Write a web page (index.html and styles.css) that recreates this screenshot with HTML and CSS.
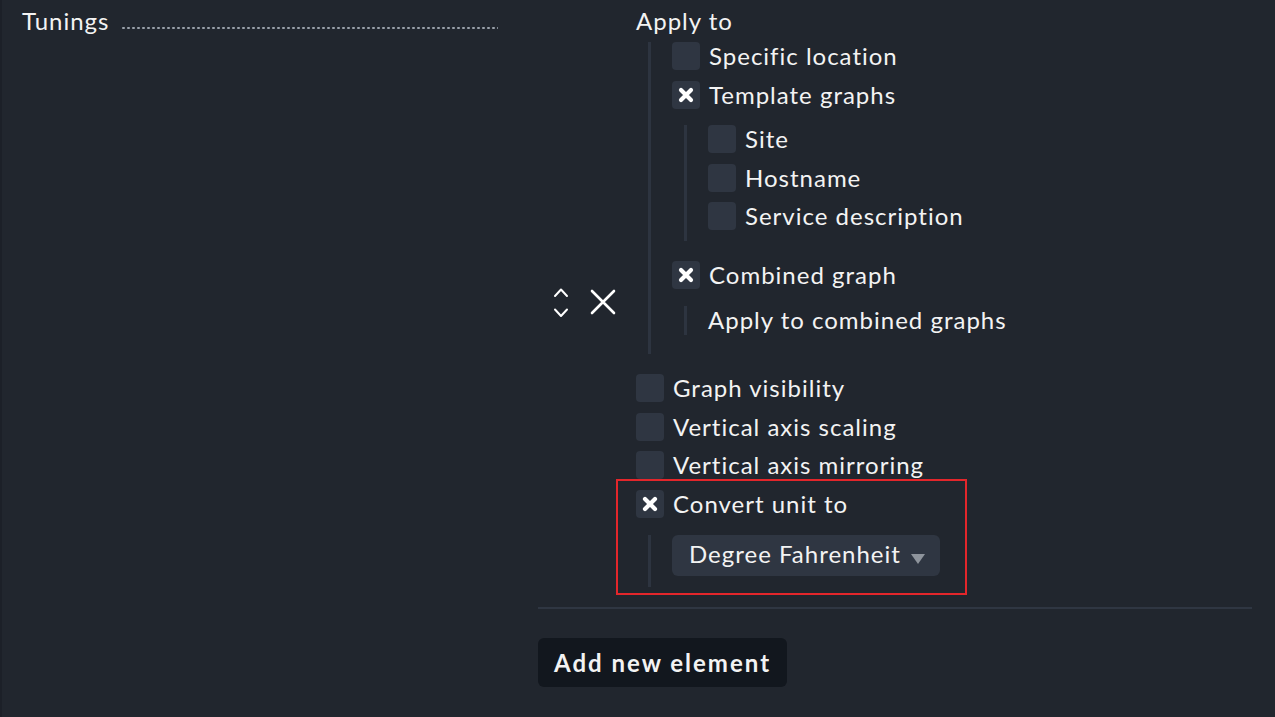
FILE: index.html
```html
<!DOCTYPE html>
<html>
<head>
<meta charset="utf-8">
<link rel="stylesheet" href="styles.css">
</head>
<body>
<div class="page">
  <div class="label-col">
    <span class="title">Tunings</span>
    <span class="dots"></span>
  </div>
  <div class="value-col">
    <div class="entry">
      <div class="entry-controls">
        <svg class="ico-updown" width="16" height="31" viewBox="0 0 16 31"><path d="M2 9 L8 2.5 L14 9 M2 22.5 L8 29 L14 22.5" fill="none" stroke="#fff" stroke-width="2" stroke-linecap="round" stroke-linejoin="round"/></svg>
        <svg class="ico-del" width="26" height="26" viewBox="0 0 26 26"><path d="M2 2 L24 24 M24 2 L2 24" fill="none" stroke="#fff" stroke-width="2.6" stroke-linecap="round"/></svg>
      </div>
      <div class="dict">
        <div class="heading">Apply to</div>
        <div class="nest nest-apply">
          <div class="row"><span class="cb"></span><span class="lbl">Specific location</span></div>
          <div class="row"><span class="cb on"><svg width="16" height="16" viewBox="0 0 16 16"><path d="M3 3 L13 13 M13 3 L3 13" stroke="#fff" stroke-width="4.2" stroke-linecap="round"/></svg></span><span class="lbl">Template graphs</span></div>
          <div class="nest nest-tpl">
            <div class="row"><span class="cb"></span><span class="lbl">Site</span></div>
            <div class="row"><span class="cb"></span><span class="lbl">Hostname</span></div>
            <div class="row"><span class="cb"></span><span class="lbl">Service description</span></div>
          </div>
          <div class="row row-combined"><span class="cb on"><svg width="16" height="16" viewBox="0 0 16 16"><path d="M3 3 L13 13 M13 3 L3 13" stroke="#fff" stroke-width="4.2" stroke-linecap="round"/></svg></span><span class="lbl">Combined graph</span></div>
          <div class="nest nest-comb">
            <div class="plain">Apply to combined graphs</div>
          </div>
        </div>
        <div class="row row-vis"><span class="cb"></span><span class="lbl">Graph visibility</span></div>
        <div class="row"><span class="cb"></span><span class="lbl">Vertical axis scaling</span></div>
        <div class="row"><span class="cb"></span><span class="lbl">Vertical axis mirroring</span></div>
        <div class="convert">
          <div class="row"><span class="cb on"><svg width="16" height="16" viewBox="0 0 16 16"><path d="M3 3 L13 13 M13 3 L3 13" stroke="#fff" stroke-width="4.2" stroke-linecap="round"/></svg></span><span class="lbl">Convert unit to</span></div>
          <div class="nest nest-unit">
            <div class="select"><span class="select-text">Degree Fahrenheit</span><span class="caret"></span></div>
          </div>
        </div>
      </div>
    </div>
    <div class="rule"></div>
    <button class="btn">Add new element</button>
  </div>
</div>
</body>
</html>
```

FILE: styles.css
```css
html, body {
  margin: 0;
  padding: 0;
  height: 100%;
}
body {
  background: #21262e;
  color: #f3f3f3;
  font-family: Lato, "Noto Sans", sans-serif;
  font-size: 24px;
  line-height: 28px;
  letter-spacing: 1px;
}
.page {
  display: flex;
  min-height: 717px;
  box-sizing: border-box;
  border-left: 2px solid #1c2028;
}
.label-col {
  width: 536px;
  padding: 7px 0 0 20px;
  box-sizing: border-box;
  display: flex;
  align-items: flex-start;
}
.title {
  white-space: nowrap;
}
.dots {
  width: 377px;
  height: 4px;
  margin: 19px 0 0 12px;
  background-image: radial-gradient(circle at 50% 50%, #9aa1aa 1px, transparent 1.5px);
  background-size: 5px 4px;
  background-repeat: repeat-x;
}
.value-col {
  width: 714px;
}
.entry {
  display: flex;
}
.entry-controls {
  width: 98px;
  box-sizing: border-box;
  padding: 14px 0 0 15px;
  display: flex;
  align-items: center;
  gap: 21px;
}
.ico-updown { margin-top: 3px; }
.ico-del { margin-top: 3px; }
.dict {
  padding-top: 7px;
}
.heading {
  height: 35px;
}
.nest {
  margin-left: 12px;
  border-left: 3px solid #2d3440;
  padding-left: 21px;
}
.row {
  display: flex;
  align-items: center;
  gap: 9px;
  height: 28px;
  margin-bottom: 10.5px;
}
.row:last-child {
  margin-bottom: 0;
}
.cb {
  width: 28px;
  height: 28px;
  flex: none;
  background: #2f3642;
  border-radius: 4px;
  display: flex;
  align-items: center;
  justify-content: center;
}
.lbl {
  white-space: nowrap;
}
.nest-apply {
  padding-bottom: 19px;
}
.nest-tpl {
  margin-top: 16.5px;
  padding-bottom: 11px;
  margin-bottom: 20px;
}
.nest-comb {
  margin-top: 17px;
  height: 29px;
}
.plain {
  line-height: 27px;
  white-space: nowrap;
}
.row-vis {
  margin-top: 20px;
}
.convert {
  position: relative;
  margin-top: 11px;
}
.convert::after {
  content: "";
  position: absolute;
  left: -20px;
  top: -11px;
  width: 351px;
  height: 116px;
  border: 2px solid #e3262b;
  box-sizing: border-box;
  pointer-events: none;
}
.nest-unit {
  margin-top: 17px;
  padding-bottom: 11px;
}
.select {
  display: inline-flex;
  align-items: center;
  box-sizing: border-box;
  width: 268px;
  height: 41px;
  padding: 0 15px 3px 17px;
  background: #2f3642;
  border-radius: 6px;
  white-space: nowrap;
}
.select-text {
  flex: 1;
}
.caret {
  width: 0;
  height: 0;
  border-left: 7.5px solid transparent;
  border-right: 7.5px solid transparent;
  border-top: 10px solid #8e949c;
  margin-top: 9px;
}
.rule {
  height: 2px;
  background: #2f3642;
  margin-top: 20px;
}
.btn {
  margin-top: 29px;
  height: 49px;
  padding: 0 16px;
  border: none;
  border-radius: 6px;
  background: #12171e;
  color: #f3f3f3;
  font-family: Lato, "Noto Sans", sans-serif;
  font-weight: 700;
  font-size: 24px;
  letter-spacing: 2px;
}
```
